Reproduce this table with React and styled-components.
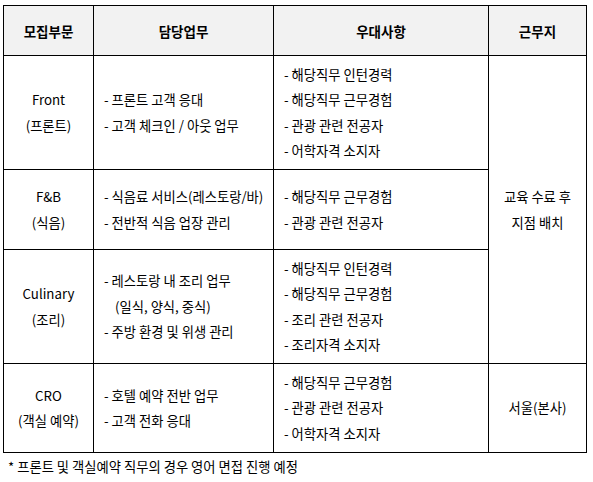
import React from 'react'
import styled, { createGlobalStyle } from 'styled-components'

const GlobalStyle = createGlobalStyle`
  body {
    margin: 0;
    background: #fff;
    font-family: "Noto Sans CJK KR", "Noto Sans", sans-serif;
    color: #000;
  }
`

const Page = styled.div`
  padding: 5px 0 0 3px;
  width: 593px;
  box-sizing: border-box;
`

const Table = styled.table`
  border-collapse: collapse;
  table-layout: fixed;
  width: 583px;
  font-size: 13.3px;
`

const HeadCell = styled.th`
  background: #f2f2f2;
  border: 1px solid #000;
  height: 49px;
  padding: 0;
  font-weight: 700;
  font-size: 13.5px;
  text-align: center;
  vertical-align: middle;
`

const Cell = styled.td`
  border: 1px solid #000;
  padding: 0 0 0 ${(p) => (p.$center ? 0 : 10)}px;
  text-align: ${(p) => (p.$center ? 'center' : 'left')};
  vertical-align: middle;
  line-height: 25.5px;
`

const Row = styled.tr`
  height: ${(p) => p.$h}px;
`

const List = styled.ul`
  list-style: none;
  margin: 0;
  padding: 0;
`

const Item = styled.li`
  padding-left: ${(p) => (p.$sub ? 11 : 0)}px;
`

const Note = styled.p`
  margin: 4px 0 0 5px;
  font-size: 13.3px;
  line-height: 20px;
`

const rows = [
  {
    h: 114,
    name: ['Front', '(프론트)'],
    duty: [['- 프론트 고객 응대'], ['- 고객 체크인 / 아웃 업무']],
    pref: ['- 해당직무 인턴경력', '- 해당직무 근무경험', '- 관광 관련 전공자', '- 어학자격 소지자'],
  },
  {
    h: 80,
    name: ['F&B', '(식음)'],
    duty: [['- 식음료 서비스(레스토랑/바)'], ['- 전반적 식음 업장 관리']],
    pref: ['- 해당직무 근무경험', '- 관광 관련 전공자'],
  },
  {
    h: 114,
    name: ['Culinary', '(조리)'],
    duty: [['- 레스토랑 내 조리 업무'], ['(일식, 양식, 중식)', true], ['- 주방 환경 및 위생 관리']],
    pref: ['- 해당직무 인턴경력', '- 해당직무 근무경험', '- 조리 관련 전공자', '- 조리자격 소지자'],
  },
  {
    h: 89,
    name: ['CRO', '(객실 예약)'],
    duty: [['- 호텔 예약 전반 업무'], ['- 고객 전화 응대']],
    pref: ['- 해당직무 근무경험', '- 관광 관련 전공자', '- 어학자격 소지자'],
  },
]

export default function App() {
  return (
    <>
      <GlobalStyle />
      <Page>
        <Table>
          <colgroup>
            <col style={{ width: 90 }} />
            <col style={{ width: 180 }} />
            <col style={{ width: 215 }} />
            <col style={{ width: 98 }} />
          </colgroup>
          <thead>
            <tr>
              <HeadCell>모집부문</HeadCell>
              <HeadCell>담당업무</HeadCell>
              <HeadCell>우대사항</HeadCell>
              <HeadCell>근무지</HeadCell>
            </tr>
          </thead>
          <tbody>
            {rows.map((r, i) => (
              <Row key={r.name[0]} $h={r.h}>
                <Cell $center>
                  {r.name[0]}
                  <br />
                  {r.name[1]}
                </Cell>
                <Cell>
                  <List>
                    {r.duty.map(([t, sub]) => (
                      <Item key={t} $sub={sub}>{t}</Item>
                    ))}
                  </List>
                </Cell>
                <Cell>
                  <List>
                    {r.pref.map((t) => (
                      <Item key={t}>{t}</Item>
                    ))}
                  </List>
                </Cell>
                {i === 0 && (
                  <Cell $center rowSpan={3}>
                    교육 수료 후
                    <br />
                    지점 배치
                  </Cell>
                )}
                {i === 3 && <Cell $center>서울(본사)</Cell>}
              </Row>
            ))}
          </tbody>
        </Table>
        <Note>* 프론트 및 객실예약 직무의 경우 영어 면접 진행 예정</Note>
      </Page>
    </>
  )
}
